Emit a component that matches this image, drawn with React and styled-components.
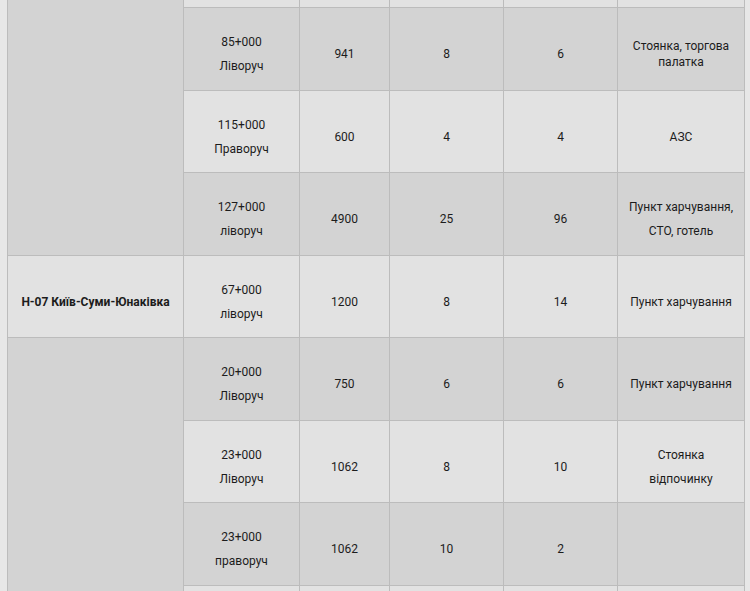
import React from "react";
import styled, { createGlobalStyle } from "styled-components";

const GlobalStyle = createGlobalStyle`
  html, body {
    margin: 0;
    padding: 0;
    background: #e7e7e7;
  }
  body {
    font-family: Roboto, "Liberation Sans", Arial, sans-serif;
  }
`;

const Viewport = styled.div`
  width: 750px;
  height: 591px;
  overflow: hidden;
  padding: 0 6px 0 7px;
  box-sizing: border-box;
`;

const Table = styled.table`
  width: 737px;
  margin-top: -75.5px;
  border-collapse: collapse;
  table-layout: fixed;
  font-size: 12px;
  color: #1c1c1c;
`;

const Row = styled.tr`
  height: 82.5px;
  background: ${(p) => (p.$dark ? "#d3d3d3" : "#e2e2e2")};
`;

const Cell = styled.td`
  border: 1px solid #bcbcbc;
  padding: 11px 4px 0;
  text-align: center;
  vertical-align: middle;
  white-space: nowrap;
  line-height: ${(p) => (p.$tight ? "16px" : "24px")};
`;

const RoadCell = styled(Cell)`
  font-weight: 700;
  background: ${(p) => (p.$dark ? "#d3d3d3" : "#e2e2e2")};
`;

const widths = [176, 116, 90, 114, 114, 127];

const groups = [
  {
    road: "",
    dark: true,
    rows: [
      { km: "", side: "", area: "", a: "", b: "", service: "", dark: false },
      { km: "85+000", side: "Ліворуч", area: "941", a: "8", b: "6", service: ["Стоянка, торгова", "палатка"], tight: true, dark: true },
      { km: "115+000", side: "Праворуч", area: "600", a: "4", b: "4", service: "АЗС", dark: false },
      { km: "127+000", side: "ліворуч", area: "4900", a: "25", b: "96", service: ["Пункт харчування,", "СТО, готель"], dark: true },
    ],
  },
  {
    road: "Н-07 Київ-Суми-Юнаківка",
    dark: false,
    rows: [
      { km: "67+000", side: "ліворуч", area: "1200", a: "8", b: "14", service: "Пункт харчування", dark: false },
    ],
  },
  {
    road: "",
    dark: true,
    rows: [
      { km: "20+000", side: "Ліворуч", area: "750", a: "6", b: "6", service: "Пункт харчування", dark: true },
      { km: "23+000", side: "Ліворуч", area: "1062", a: "8", b: "10", service: ["Стоянка", "відпочинку"], dark: false },
      { km: "23+000", side: "праворуч", area: "1062", a: "10", b: "2", service: "", dark: true },
      { km: "", side: "", area: "", a: "", b: "", service: "", dark: false },
    ],
  },
];

function Lines({ value }) {
  if (!Array.isArray(value)) return value;
  return value.map((line, i) => (
    <React.Fragment key={i}>
      {i > 0 && <br />}
      {line}
    </React.Fragment>
  ));
}

export default function App() {
  return (
    <>
      <GlobalStyle />
      <Viewport>
        <Table>
          <colgroup>
            {widths.map((w, i) => (
              <col key={i} style={{ width: w }} />
            ))}
          </colgroup>
          <tbody>
            {groups.map((g, gi) =>
              g.rows.map((r, ri) => (
                <Row key={`${gi}-${ri}`} $dark={r.dark}>
                  {ri === 0 && (
                    <RoadCell rowSpan={g.rows.length} $dark={g.dark}>
                      {g.road}
                    </RoadCell>
                  )}
                  <Cell>
                    {r.km}
                    {r.side && <br />}
                    {r.side}
                  </Cell>
                  <Cell>{r.area}</Cell>
                  <Cell>{r.a}</Cell>
                  <Cell>{r.b}</Cell>
                  <Cell $tight={r.tight}>
                    <Lines value={r.service} />
                  </Cell>
                </Row>
              ))
            )}
          </tbody>
        </Table>
      </Viewport>
    </>
  );
}
